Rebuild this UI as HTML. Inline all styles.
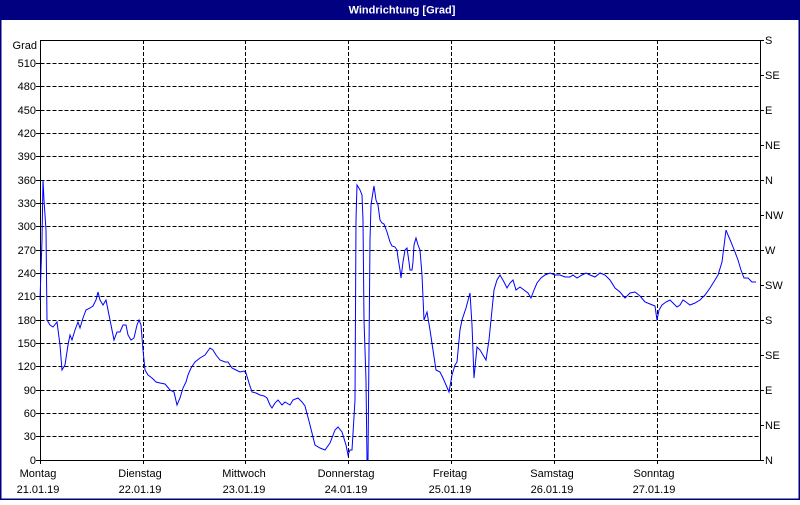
<!DOCTYPE html>
<html><head><meta charset="utf-8"><style>
html,body{margin:0;padding:0;background:#fff}
body{width:800px;height:500px;overflow:hidden;font-family:"Liberation Sans",sans-serif}
</style></head><body>
<svg width="800" height="500" xmlns="http://www.w3.org/2000/svg" font-family="'Liberation Sans', sans-serif" font-size="11">
<rect x="0" y="0" width="800" height="500" fill="#fff"/>
<rect x="0.5" y="0.5" width="799" height="499" fill="none" stroke="#000080" stroke-width="2"/>
<rect x="0" y="0" width="800" height="20" fill="#000080"/>
<text x="402" y="13.5" fill="#fff" font-weight="bold" font-size="11" text-anchor="middle">Windrichtung [Grad]</text>
<g stroke="#000" stroke-width="1" stroke-dasharray="4,2" shape-rendering="crispEdges">
<path d="M40.5 63.5H760M40.5 86.5H760M40.5 110.5H760M40.5 133.5H760M40.5 156.5H760M40.5 180.5H760M40.5 203.5H760M40.5 226.5H760M40.5 250.5H760M40.5 273.5H760M40.5 296.5H760M40.5 320.5H760M40.5 343.5H760M40.5 366.5H760M40.5 390.5H760M40.5 413.5H760M40.5 436.5H760"/>
<path d="M143.5 40V460M245.5 40V460M348.5 40V460M451.5 40V460M554.5 40V460M657.5 40V460"/>
</g>
<g stroke="#000" stroke-width="1" shape-rendering="crispEdges" fill="none">
<path d="M40.5 40V460.5H760.5V40"/>
<path d="M40.5 40.5H760"/>
<path d="M36 63.5h4M36 86.5h4M36 110.5h4M36 133.5h4M36 156.5h4M36 180.5h4M36 203.5h4M36 226.5h4M36 250.5h4M36 273.5h4M36 296.5h4M36 320.5h4M36 343.5h4M36 366.5h4M36 390.5h4M36 413.5h4M36 436.5h4M36 460.5h4"/>
<path d="M760 40.5h4M760 75.5h4M760 110.5h4M760 145.5h4M760 180.5h4M760 215.5h4M760 250.5h4M760 285.5h4M760 320.5h4M760 355.5h4M760 390.5h4M760 425.5h4M760 460.5h4"/>
<path d="M40.5 460v4M143.5 460v4M245.5 460v4M348.5 460v4M451.5 460v4M554.5 460v4M657.5 460v4"/>
</g>
<g fill="#000" text-anchor="end">
<text x="37" y="49">Grad</text>
<text x="36" y="67">510</text><text x="36" y="90">480</text><text x="36" y="114">450</text><text x="36" y="137">420</text><text x="36" y="160">390</text><text x="36" y="184">360</text><text x="36" y="207">330</text><text x="36" y="230">300</text><text x="36" y="254">270</text><text x="36" y="277">240</text><text x="36" y="300">210</text><text x="36" y="324">180</text><text x="36" y="347">150</text><text x="36" y="370">120</text><text x="36" y="394">90</text><text x="36" y="417">60</text><text x="36" y="440">30</text><text x="36" y="464">0</text>
</g>
<g fill="#000">
<text x="765" y="44">S</text><text x="765" y="79">SE</text><text x="765" y="114">E</text><text x="765" y="149">NE</text><text x="765" y="184">N</text><text x="765" y="219">NW</text><text x="765" y="254">W</text><text x="765" y="289">SW</text><text x="765" y="324">S</text><text x="765" y="359">SE</text><text x="765" y="394">E</text><text x="765" y="429">NE</text><text x="765" y="464">N</text>
</g>
<g fill="#000" text-anchor="middle">
<text x="38" y="477">Montag</text><text x="38" y="493">21.01.19</text>
<text x="140" y="477">Dienstag</text><text x="140" y="493">22.01.19</text>
<text x="244" y="477">Mittwoch</text><text x="244" y="493">23.01.19</text>
<text x="346" y="477">Donnerstag</text><text x="346" y="493">24.01.19</text>
<text x="450" y="477">Freitag</text><text x="450" y="493">25.01.19</text>
<text x="552" y="477">Samstag</text><text x="552" y="493">26.01.19</text>
<text x="654" y="477">Sonntag</text><text x="654" y="493">27.01.19</text>
</g>
<polyline fill="none" stroke="#0000ff" stroke-width="1" points="40,300 42,240 43,180 44,200 46,230 47,320 50,325 53,327 57,322 60,345 62,370 65,365 68,345 70,335 72,340 75,330 78,322 80,328 83,318 86,310 90,308 93,306 96,300 98,292 100,300 103,305 106,300 108,310 110,320 112,330 114,340 117,332 120,332 123,325 126,325 128,335 131,340 134,338 137,325 139,320 141,325 143,350 145,370 148,375 152,378 156,382 160,383 165,384 170,390 174,392 177,405 180,398 183,388 186,382 188,375 191,368 195,362 200,358 205,355 210,348 213,350 216,355 220,360 225,362 228,362 232,368 236,370 240,372 244,371 246,373 249,383 252,392 256,393 260,395 264,396 267,398 270,405 272,408 275,403 278,400 282,405 285,402 290,405 293,400 298,398 302,402 305,406 310,425 315,445 320,448 325,450 330,443 335,430 338,427 342,432 346,445 348,455 350,450 352,450 355,400 356,220 357,185 360,190 362,195 363,220 364,320 366,380 367,460 368,460 369,350 370,240 371,205 373,192 374,186 376,200 378,205 380,220 382,223 384,224 387,232 390,242 392,246 395,247 397,250 398,258 400,270 401,278 403,262 405,250 407,248 409,262 410,270 412,270 413,262 414,245 416,238 418,245 420,250 422,275 424,320 427,312 430,330 433,350 436,370 440,372 443,378 446,385 449,392 452,375 455,365 457,362 460,330 462,320 466,308 470,293 472,325 474,378 477,347 480,350 483,355 486,360 489,340 492,310 494,290 497,280 500,275 504,282 507,288 510,283 513,280 516,290 520,287 524,290 528,293 531,298 534,290 537,283 541,278 545,275 550,273 555,275 560,275 565,277 570,277 573,275 577,278 582,275 586,273 590,275 595,277 600,273 605,275 610,280 615,288 620,292 625,298 630,293 635,292 640,296 645,302 650,304 655,306 657,320 659,310 662,305 666,302 670,300 674,304 677,307 680,305 683,300 686,302 690,305 695,303 700,300 705,295 710,288 715,280 718,275 722,262 726,230 728,235 731,242 735,252 738,260 741,270 744,278 748,278 752,282 756,282"/>
</svg>
</body></html>
